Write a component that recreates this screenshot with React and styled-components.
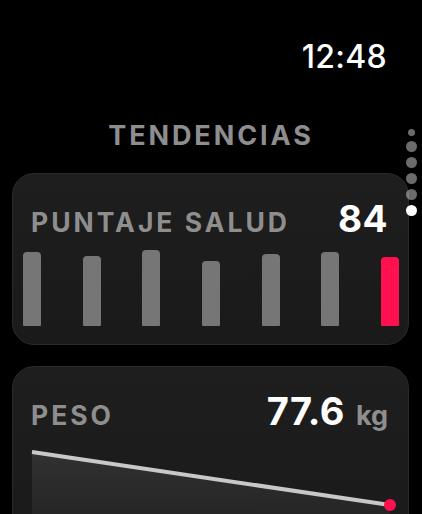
import React from 'react';
import styled, { createGlobalStyle } from 'styled-components';

const GlobalStyle = createGlobalStyle`
   html, body {
      margin: 0;
      padding: 0;
      background: #000;
   }
   body {
      font-family: Inter, "Noto Sans", "Liberation Sans", sans-serif;
      -webkit-font-smoothing: antialiased;
   }
`;

const scores = [74, 70, 76, 65, 72, 74, 69];

const Screen = styled.div`
   position: relative;
   width: 422px;
   height: 514px;
   overflow: hidden;
   background: #000;
   color: #fff;
   display: flex;
   flex-direction: column;
`;

const StatusBar = styled.div`
   display: flex;
   justify-content: flex-end;
   padding: 41px 35px 0 0;
`;

const Clock = styled.span`
   font-size: 32px;
   font-weight: 450;
   line-height: 1;
   letter-spacing: 0.3px;
   color: #fff;
`;

const Heading = styled.h1`
   margin: 49px 0 0;
   text-align: center;
   font-size: 27px;
   font-weight: 700;
   line-height: 1;
   letter-spacing: 2.9px;
   color: #8e8e8e;
`;

const Card = styled.section`
   margin: ${(p) => p.$top}px 13px 0 12px;
   padding: ${(p) => p.$pad}px 9px 18px 10px;
   border: 1px solid #2a2a2a;
   border-radius: 22px;
   background: linear-gradient(180deg, #1e1e1e 0%, #1a1a1a 100%);
   flex-shrink: 0;
`;

const CardHeader = styled.div`
   display: flex;
   align-items: baseline;
   justify-content: space-between;
   padding: 0 11px 0 8px;
`;

const Label = styled.span`
   font-size: 26.5px;
   font-weight: 700;
   line-height: 1;
   letter-spacing: 3px;
   color: #8e8e8e;
`;

const Value = styled.span`
   font-size: ${(p) => p.$size}px;
   font-weight: 700;
   line-height: 1;
   letter-spacing: 0.4px;
   color: #fff;
`;

const Unit = styled.span`
   margin-left: 11px;
   font-size: 27px;
   font-weight: 700;
   color: #8e8e8e;
`;

const Bars = styled.div`
   display: flex;
   align-items: flex-end;
   justify-content: space-between;
   height: 76px;
   margin-top: 13px;
`;

const Bar = styled.div`
   width: 18px;
   border-radius: 4px 4px 1px 1px;
   background: ${(p) => (p.$today ? '#ff1150' : '#767676')};
`;

const Chart = styled.svg`
   display: block;
   margin-top: 12px;
`;

const PageDots = styled.div`
   position: absolute;
   top: 129px;
   right: 5px;
   display: flex;
   flex-direction: column;
   align-items: center;
   gap: 5px;
`;

const Dot = styled.span`
   width: ${(p) => (p.$small ? 7 : 11)}px;
   height: ${(p) => (p.$small ? 7 : 11)}px;
   border-radius: 50%;
   background: ${(p) => (p.$active ? '#fff' : 'rgba(255,255,255,0.42)')};
`;

const App = () => {
   return (
      <>
         <GlobalStyle />
         <Screen>
            <StatusBar>
               <Clock>12:48</Clock>
            </StatusBar>
            <Heading>TENDENCIAS</Heading>

            <Card $top={24} $pad={26}>
               <CardHeader>
                  <Label>PUNTAJE SALUD</Label>
                  <Value $size={37}>84</Value>
               </CardHeader>
               <Bars>
                  {scores.map((h, i) => (
                     <Bar
                        key={i}
                        $today={i === scores.length - 1}
                        style={{ height: h }}
                     />
                  ))}
               </Bars>
            </Card>

            <Card $top={21} $pad={25}>
               <CardHeader>
                  <Label>PESO</Label>
                  <span>
                     <Value $size={38}>77.6</Value>
                     <Unit>kg</Unit>
                  </span>
               </CardHeader>
               <Chart width="376" height="90" viewBox="0 0 376 90">
                  <defs>
                     <linearGradient id="pesoFill" x1="0" y1="0" x2="0" y2="1">
                        <stop offset="0%" stopColor="#313131" />
                        <stop offset="100%" stopColor="#222" />
                     </linearGradient>
                  </defs>
                  <polygon points="9,8 367,61 367,90 9,90" fill="url(#pesoFill)" />
                  <line
                     x1="9"
                     y1="8"
                     x2="367"
                     y2="61"
                     stroke="#c8c8c8"
                     strokeWidth="4"
                  />
                  <circle cx="367" cy="61" r="6" fill="#ff1150" />
               </Chart>
            </Card>

            <PageDots>
               <Dot $small />
               <Dot />
               <Dot />
               <Dot />
               <Dot />
               <Dot $active />
            </PageDots>
         </Screen>
      </>
   );
};

export default App;
